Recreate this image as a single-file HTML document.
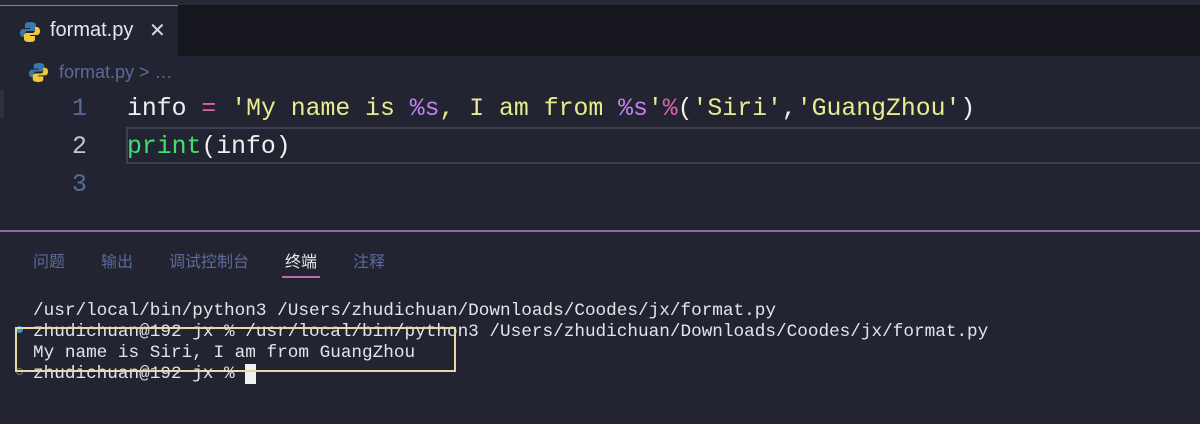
<!DOCTYPE html>
<html><head><meta charset="utf-8"><style>
*{margin:0;padding:0;box-sizing:border-box}
body{width:1200px;height:424px;overflow:hidden;background:#222531;position:relative;font-family:"Liberation Sans","Noto Sans CJK SC",sans-serif}
.abs{position:absolute;white-space:pre}
.mono{font-family:"Liberation Mono","DejaVu Sans Mono",monospace}
</style></head><body>
<div class="abs" style="left:0;top:0;width:1200px;height:5px;background:#262836"></div>
<div class="abs" style="left:0;top:5px;width:1200px;height:51px;background:#15161e"></div>
<div class="abs" style="left:0;top:5px;width:178px;height:51px;background:#222531;border-top:1px solid #c0628e"></div>
<svg class="abs" style="left:19px;top:21px" width="22" height="22" viewBox="0 0 22 22"><path d="M11 1c-5 0-5 2-5 3v3h5v1H4C2 8 1 10 1 12s1 4 3 4h2v-3c0-2 1-3 3-3h5c2 0 3-1 3-3V4c0-2-2-3-6-3z" fill="#3b77a8"/><path d="M11 21c5 0 5-2 5-3v-3h-5v-1h7c2 0 3-2 3-4s-1-4-3-4h-2v3c0 2-1 3-3 3H8c-2 0-3 1-3 3v3c0 2 2 3 6 3z" fill="#f2c83a"/></svg>
<div class="abs" style="left:50px;top:19px;font-size:20px;color:#e6e6ea">format.py</div>
<div class="abs" style="left:149px;top:18px;font-size:20px;color:#d8d8dd">✕</div>
<svg class="abs" style="left:28px;top:62px" width="21" height="21" viewBox="0 0 22 22"><path d="M11 1c-5 0-5 2-5 3v3h5v1H4C2 8 1 10 1 12s1 4 3 4h2v-3c0-2 1-3 3-3h5c2 0 3-1 3-3V4c0-2-2-3-6-3z" fill="#3b77a8"/><path d="M11 21c5 0 5-2 5-3v-3h-5v-1h7c2 0 3-2 3-4s-1-4-3-4h-2v3c0 2-1 3-3 3H8c-2 0-3 1-3 3v3c0 2 2 3 6 3z" fill="#f2c83a"/></svg>
<div class="abs" style="left:59px;top:62px;font-size:18px;color:#5b6a9a">format.py &gt; …</div>
<div class="abs" style="left:0;top:90px;width:4px;height:28px;background:#2d3040"></div>
<div class="abs" style="left:126px;top:127px;width:1080px;height:37px;border:2px solid #3c3f50"></div>
<div class="abs mono" style="left:72px;top:90px;font-size:24.8px;line-height:38px;color:#5b6a9a">1<br><span style="color:#c8c8cc">2</span><br>3</div>
<div class="abs mono" style="left:127px;top:90px;font-size:24.8px;line-height:38px;color:#f0f0f0">info <span style="color:#e060b0">=</span> <span style="color:#e8ec8e">'My name is </span><span style="color:#c77ff0">%s</span><span style="color:#e8ec8e">, I am from </span><span style="color:#c77ff0">%s</span><span style="color:#e8ec8e">'</span><span style="color:#e060b0">%</span>(<span style="color:#e8ec8e">'Siri'</span>,<span style="color:#e8ec8e">'GuangZhou'</span>)
<span style="color:#40e070">print</span>(info)</div>
<div class="abs" style="left:0;top:230px;width:1200px;height:2px;background:#8c6aaa"></div>
<div class="abs" style="left:33px;top:248px;font-size:16px;color:#5b6a9a">问题</div>
<div class="abs" style="left:101px;top:248px;font-size:16px;color:#5b6a9a">输出</div>
<div class="abs" style="left:169px;top:248px;font-size:16px;color:#5b6a9a">调试控制台</div>
<div class="abs" style="left:285px;top:248px;font-size:16px;color:#e6e6ea">终端</div>
<div class="abs" style="left:353px;top:248px;font-size:16px;color:#5b6a9a">注释</div>
<div class="abs" style="left:282px;top:276px;width:38px;height:2px;background:#c06ab0"></div>
<div class="abs mono" style="left:33px;top:301px;font-size:17.7px;line-height:21px;color:#e4e4e8">/usr/local/bin/python3 /Users/zhudichuan/Downloads/Coodes/jx/format.py
zhudichuan@192 jx % /usr/local/bin/python3 /Users/zhudichuan/Downloads/Coodes/jx/format.py
My name is Siri, I am from GuangZhou
zhudichuan@192 jx % <span style="background:#f0f0f0"> </span></div>
<div class="abs" style="left:16px;top:326px;width:7px;height:7px;border-radius:50%;background:#2a9ad0"></div>
<div class="abs" style="left:16px;top:368px;width:7px;height:7px;border-radius:50%;border:1px solid #777"></div>
<div class="abs" style="left:15px;top:327px;width:441px;height:45px;border:2px solid #e6d9a4"></div>
</body></html>
